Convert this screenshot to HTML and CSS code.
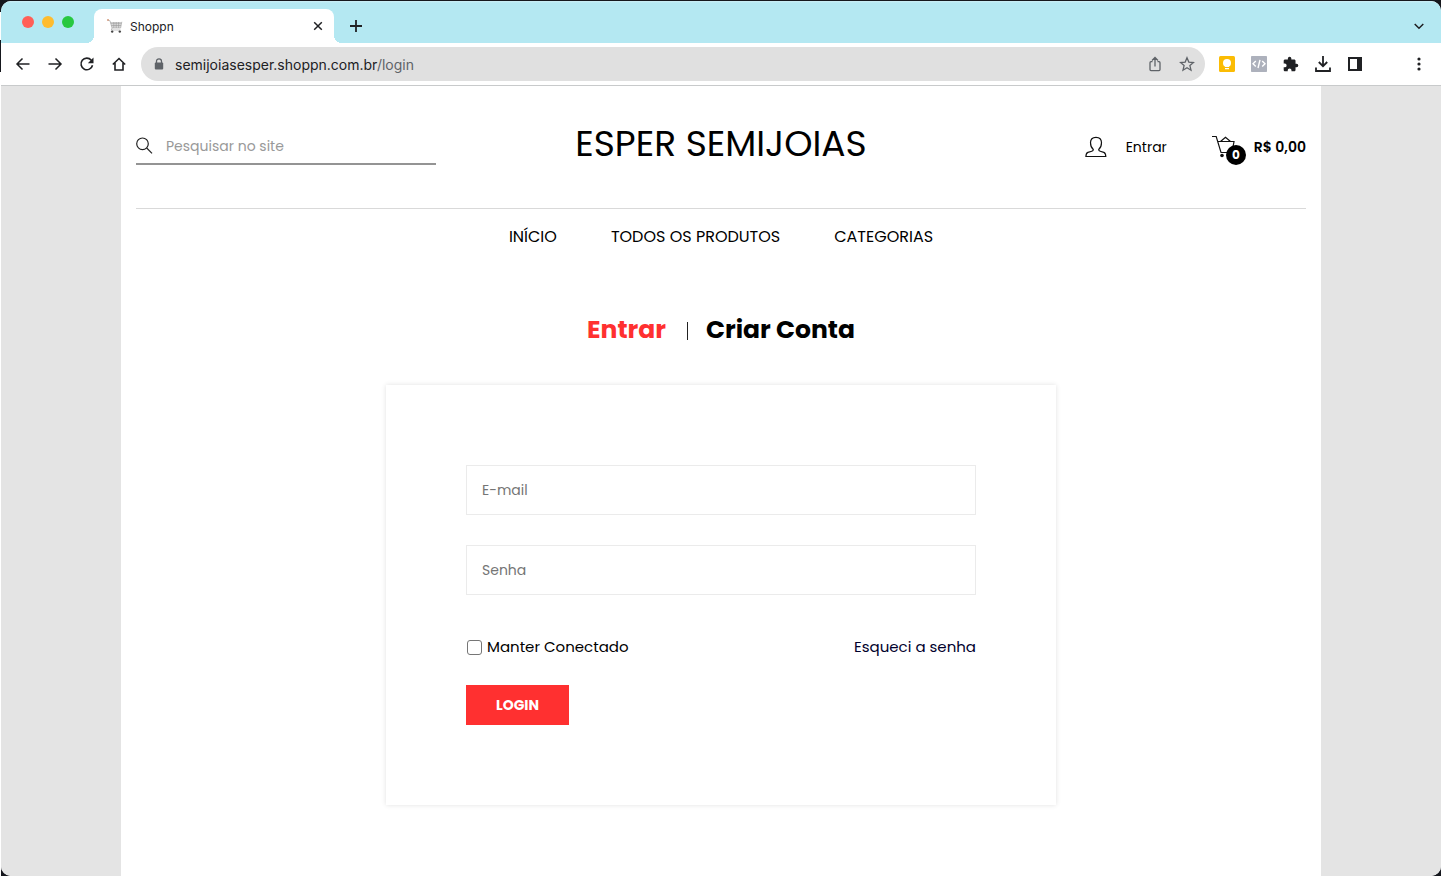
FILE: index.html
```html
<!DOCTYPE html>
<html lang="pt-BR">
<head>
<meta charset="utf-8">
<meta name="viewport" content="width=device-width, initial-scale=1">
<title>Shoppn</title>
<link rel="stylesheet" href="styles.css">
</head>
<body>
<div class="window">
  <div class="tabstrip">
    <div class="lights"><span class="light light-close"></span><span class="light light-min"></span><span class="light light-max"></span></div>
    <div class="tab">
      <svg class="favicon" width="16" height="16" viewBox="0 0 16 16" fill="none"><path d="M3.500 4h11l-1 5.700H5z" fill="#d8d8d8"/><path d="M1 2.300l2 .4L5 10h8.600l1.200-6.200M3.700 5.200h10.800M4.300 7.500h9.800M6.800 4v6M9.200 4v6M11.600 4v6M5 10l-.7 2h9.200" stroke="#999" stroke-width=".6"/><path d="M0 2h2" stroke="#d39a7c" stroke-width="1.300"/><circle cx="5.200" cy="13.600" r="1.200" fill="#444"/><circle cx="12.800" cy="13.600" r="1.200" fill="#444"/></svg>
      <span class="tab-title">Shoppn</span>
      <button class="tab-close" type="button" aria-label="Fechar guia"><svg width="10" height="10" viewBox="0 0 10 10"><path d="M1.200 1.200l7.600 7.600M8.800 1.200L1.200 8.800" stroke="#202124" stroke-width="1.500"/></svg></button>
    </div>
    <button class="new-tab" type="button" aria-label="Nova guia"><svg width="14" height="14" viewBox="0 0 14 14"><path d="M7 1v12M1 7h12" stroke="#202124" stroke-width="1.800"/></svg></button>
    <button class="tab-search" type="button" aria-label="Pesquisar guias"><svg width="10" height="10" viewBox="0 0 10 10" fill="none"><path d="M.7 3L5 7.200 9.300 3" stroke="#202124" stroke-width="1.500"/></svg></button>
  </div>
  <div class="toolbar">
    <button class="tool" type="button" aria-label="Voltar"><svg width="16" height="16" viewBox="0 0 16 16" fill="none" stroke="#202124" stroke-width="1.500"><path d="M14.500 8H2.500M7.500 2.500L2 8l5.500 5.500"/></svg></button>
    <button class="tool" type="button" aria-label="Avançar"><svg width="16" height="16" viewBox="0 0 16 16" fill="none" stroke="#202124" stroke-width="1.500"><path d="M1.500 8h12M8.500 2.500L14 8l-5.500 5.500"/></svg></button>
    <button class="tool" type="button" aria-label="Recarregar"><svg width="16" height="16" viewBox="0 0 16 16" fill="none"><path d="M13.500 9.200A5.800 5.800 0 1 1 12.300 4.200" stroke="#202124" stroke-width="1.600"/><path d="M14.500 1.500v5.700H8.800z" fill="#202124"/></svg></button>
    <button class="tool" type="button" aria-label="Página inicial"><svg width="16" height="16" viewBox="0 0 16 16" fill="none" stroke="#202124" stroke-width="1.600"><path d="M4 7v7h8V7M1.800 8.500L8 2.500l6.200 6"/></svg></button>
    <div class="omnibox">
      <svg class="lock" width="10" height="12" viewBox="0 0 10 12"><path d="M2.500 5V3.300a2.500 2.500 0 0 1 5 0V5" fill="none" stroke="#5f6368" stroke-width="1.300"/><rect x=".8" y="4.500" width="8.400" height="7" rx="1" fill="#5f6368"/></svg>
      <span class="url">semijoiasesper.shoppn.com.br<span class="url-path">/login</span></span>
      <button class="tool" type="button" aria-label="Compartilhar"><svg width="16" height="16" viewBox="0 0 16 16" fill="none" stroke="#5f6368" stroke-width="1.300"><path d="M5.500 5.700H4a1 1 0 0 0-1 1v6.900a1 1 0 0 0 1 1h8a1 1 0 0 0 1-1V6.700a1 1 0 0 0-1-1h-1.500M8 10.500V2M5 4.500l3-3 3 3"/></svg></button>
      <button class="tool" type="button" aria-label="Favoritar"><svg width="16" height="16" viewBox="0 0 16 16" fill="none" stroke="#5f6368" stroke-width="1.300"><path d="M8 1.800l1.800 4.300 4.700.4-3.600 3.100 1.100 4.600L8 11.800l-4 2.400 1.100-4.600-3.600-3.100 4.700-.4z"/></svg></button>
    </div>
    <button class="tool" type="button" aria-label="Anotações"><svg width="16" height="16" viewBox="0 0 16 16"><rect width="16" height="16" rx="1.500" fill="#fbbc04"/><circle cx="8" cy="7" r="4" fill="#fff"/><path d="M6 9h4v2H6zM6 12h4v1.200H6z" fill="#fff"/></svg></button>
    <button class="tool" type="button" aria-label="Código"><svg width="16" height="16" viewBox="0 0 16 16" fill="none"><rect width="16" height="16" rx=".7" fill="#adb1bc"/><path d="M4.800 5L2 7.800l2.800 2.800M11.200 5L14 7.800l-2.800 2.800M9 3.800L7 12" stroke="#fff" stroke-width="1.400"/></svg></button>
    <button class="tool" type="button" aria-label="Extensões"><svg width="16" height="16" viewBox="1 0 23 23"><path fill="#202124" d="M20.500 11H19V7c0-1.100-.9-2-2-2h-4V3.500a2.500 2.500 0 0 0-5 0V5H4c-1.100 0-2 .9-2 2v3.800h1.500a2.700 2.700 0 0 1 0 5.400H2V20c0 1.100.9 2 2 2h3.800v-1.500a2.700 2.700 0 0 1 5.400 0V22H17c1.100 0 2-.9 2-2v-4h1.500a2.500 2.500 0 0 0 0-5z"/></svg></button>
    <button class="tool" type="button" aria-label="Downloads"><svg width="16" height="16" viewBox="0 0 16 16" fill="none" stroke="#202124" stroke-width="1.800"><path d="M8 0v10M3.800 6L8 10.200 12.200 6M1 11.500V15h14v-3.500"/></svg></button>
    <button class="tool" type="button" aria-label="Painel lateral"><svg width="14" height="14" viewBox="0 0 14 14"><path d="M1 1h12v12H1z" fill="none" stroke="#202124" stroke-width="2"/><path d="M9 1h4v12H9z" fill="#202124"/></svg></button>
    <button class="tool tool-menu" type="button" aria-label="Menu"><svg width="4" height="14" viewBox="0 0 4 14" fill="#202124"><circle cx="2" cy="2" r="1.600"/><circle cx="2" cy="7" r="1.600"/><circle cx="2" cy="12" r="1.600"/></svg></button>
  </div>
  <div class="viewport">
    <div class="page">
      <header class="header">
        <form class="search" role="search">
          <label for="q"><svg width="18" height="18" viewBox="0 0 18 18" fill="none" stroke="#222" stroke-width="1.200"><circle cx="6.500" cy="6.800" r="5.800"/><path d="M10.700 11l5.300 5.300"/></svg></label>
          <input id="q" type="text" placeholder="Pesquisar no site" aria-label="Pesquisar no site">
        </form>
        <h1 class="brand"><a href="#">ESPER SEMIJOIAS</a></h1>
        <div class="account">
          <a class="user" href="#"><svg width="22" height="22" viewBox="0 0 22 22" fill="none" stroke="#111" stroke-width="1.200"><path d="M8.300 13.500C6 11.500 5.500 9.500 5.500 6.700 5.500 3.200 7.500 1.300 11 1.300s5.500 1.900 5.500 5.400c0 2.800-.5 4.800-2.800 6.800 0 1 .5 1.400 1.500 1.700l3.600 1.200c1.200.4 1.900 1.800 2 4.100H.9c.1-2.300.8-3.700 2-4.100l3.900-1.200c1-.3 1.500-.7 1.500-1.700z"/></svg><span>Entrar</span></a>
          <a class="cart" href="#"><span class="cart-icon"><svg width="24" height="24" viewBox="0 0 24 24" fill="none" stroke="#111" stroke-width="1.200"><path d="M0 1.500h4.200L9 17.500h11l2-11H5.800M8.500 6.500l5-4.300 5 4.300"/><circle cx="10" cy="20.500" r="1.800" fill="#111" stroke="none"/></svg><span class="badge">0</span></span><strong>R$ 0,00</strong></a>
        </div>
      </header>
      <nav class="menu"><a href="#">INÍCIO</a><a href="#">TODOS OS PRODUTOS</a><a href="#">CATEGORIAS</a></nav>
      <main class="login">
        <div class="switch"><a class="active" href="#">Entrar</a><span class="divider"></span><a href="#">Criar Conta</a></div>
        <form class="card">
          <input class="field" type="email" placeholder="E-mail" aria-label="E-mail">
          <input class="field" type="password" placeholder="Senha" aria-label="Senha">
          <div class="options">
            <label class="remember" for="keep"><input id="keep" type="checkbox">Manter Conectado</label>
            <a href="#">Esqueci a senha</a>
          </div>
          <button class="submit" type="submit">LOGIN</button>
        </form>
      </main>
    </div>
  </div>
</div>
</body>
</html>
```
FILE: styles.css
```css
* { box-sizing: border-box; }
body {
  margin: 0;
  padding: 1px 0 0 1px;
  background:
    linear-gradient(#fff, #fff) 0 12px / 1px 28px no-repeat,
    linear-gradient(#fff, #fff) 0 72px / 1px calc(100% - 72px) no-repeat,
    #15171d;
  font-family: Poppins, Inter, "Noto Sans", sans-serif;
  color: #000;
}
a { color: inherit; text-decoration: none; }
button { padding: 0; border: 0; background: none; font: inherit; display: flex; align-items: center; justify-content: center; }
svg { display: block; flex: none; }

.window { display: flex; flex-direction: column; min-height: calc(100vh - 1px); border-radius: 10px; overflow: hidden; background: #fff; }

.tabstrip { display: flex; align-items: flex-end; height: 42px; background: linear-gradient(#cdeff6, #b4e8f2 2px); }
.lights { display: flex; gap: 8px; align-self: center; padding: 0 20px 0 21px; width: 93px; }
.light { width: 12px; height: 12px; border-radius: 50%; }
.light-close { background: #ff5f57; }
.light-min { background: #febc2e; }
.light-max { background: #28c840; }
.tab { position: relative; display: flex; align-items: center; gap: 7px; width: 240px; height: 34px; padding: 0 10px 0 13px; border-radius: 8px 8px 0 0; background: #fff; }
.tab::before, .tab::after { content: ""; position: absolute; bottom: 0; width: 8px; height: 8px; }
.tab::before { left: -8px; background: radial-gradient(circle at 0 0, transparent 8px, #fff 8px); }
.tab::after { right: -8px; background: radial-gradient(circle at 100% 0, transparent 8px, #fff 8px); }
.tab-title { flex: 1; font-family: Inter, sans-serif; font-size: 12px; color: #202124; }
.tab-close { width: 12px; height: 12px; }
.new-tab { width: 28px; height: 34px; margin-left: 8px; }
.tab-search { width: 28px; height: 34px; margin: 0 8px 0 auto; }

.toolbar { display: flex; align-items: center; height: 43px; padding: 0 8px 0 6px; border-bottom: 1px solid #c8cacb; background: #fff; }
.tool { width: 32px; height: 32px; flex: none; }
.tool-menu { margin-left: 32px; margin-right: -2px; }
.omnibox { display: flex; align-items: center; flex: 1; height: 34px; margin: 0 6px; padding: 0 2px 0 13px; border-radius: 17px; background: #e0e0e0; }
.url { flex: 1; margin-left: 11px; font-family: Inter, sans-serif; font-size: 14px; color: #202124; }
.url-path { color: #5f6368; }

.viewport { display: flex; justify-content: center; flex: 1; background: #e4e4e4; }
.page { width: 100%; max-width: 1200px; padding: 0 15px; background: #fff; }
.header { display: grid; grid-template-columns: 1fr auto 1fr; align-items: center; height: 123px; border-bottom: 1px solid #d9d9d9; }
.search { display: flex; align-items: center; gap: 12px; width: 300px; height: 36px; border-bottom: 2px solid #949494; }
.search input { flex: 1; min-width: 0; padding: 0; border: 0; outline: 0; background: none; font: 14px/20px Poppins, Inter, sans-serif; }
.search input::placeholder { color: #999; }
.brand { margin: 0; padding-bottom: 6px; font-size: 36px; line-height: 48px; font-weight: 400; }
.account { display: flex; align-items: center; justify-content: flex-end; gap: 45px; font-size: 14px; line-height: 20px; }
.user { display: flex; align-items: center; gap: 19px; }
.cart { display: flex; align-items: center; gap: 18px; }
.cart-icon { position: relative; }
.badge { position: absolute; left: 14px; top: 10px; width: 20px; height: 20px; border-radius: 50%; background: #000; color: #fff; font-size: 12px; font-weight: 700; line-height: 20px; text-align: center; }
.cart strong { font-weight: 600; }
.menu { display: flex; justify-content: center; gap: 54px; padding: 16px 0; font-size: 16px; line-height: 24px; }

.login { padding-top: 45px; }
.switch { display: flex; align-items: center; justify-content: center; font-size: 25px; font-weight: 700; line-height: 40px; }
.switch .active { color: #ff3030; }
.divider { width: 1px; height: 18px; margin: 2px 18px 0 21px; background: #222; }
.card { display: flex; flex-direction: column; max-width: 670px; margin: 35px auto 0; padding: 80px; background: #fff; box-shadow: 0 0 5px rgba(0, 0, 0, .12); }
.field { height: 50px; margin-bottom: 30px; padding: 0 15px; border: 1px solid #ebebeb; background: #fff; font: 14px/20px Poppins, Inter, sans-serif; }
.field::placeholder { color: #757575; }
.options { display: flex; justify-content: space-between; margin-top: 10px; font-size: 15px; line-height: 24px; }
.options a { color: #00002c; }
.remember { display: flex; align-items: center; gap: 4px; }
.remember input { appearance: none; width: 15px; height: 15px; margin: 0 1px; border: 1px solid #767676; border-radius: 3px; background: #fff; }
.submit { align-self: flex-start; height: 40px; margin-top: 26px; padding: 0 30px; background: #ff3030; color: #fff; font-size: 14px; font-weight: 700; }
```
